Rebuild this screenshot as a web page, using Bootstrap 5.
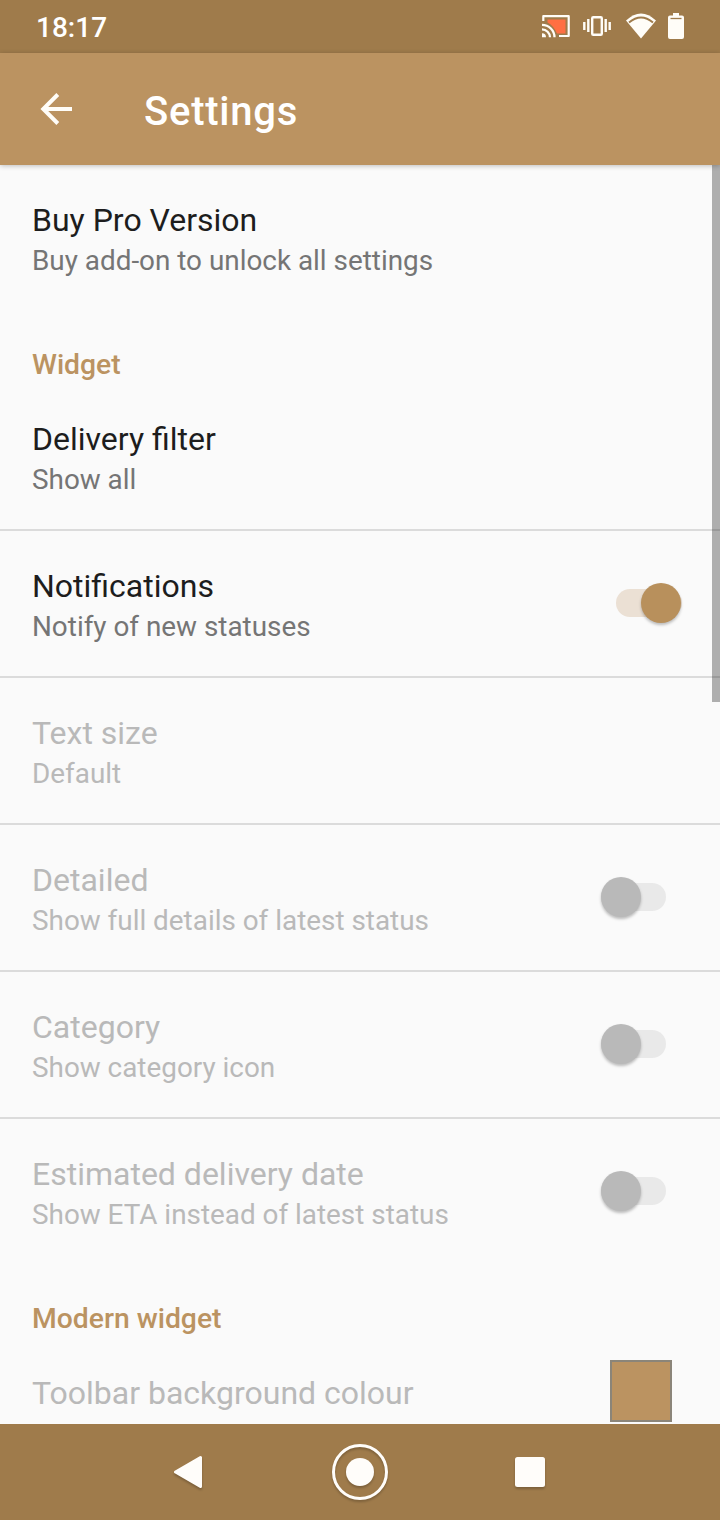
<!DOCTYPE html>
<html lang="en">
<head>
<meta charset="utf-8">
<meta name="viewport" content="width=device-width, initial-scale=1">
<title>Settings</title>
<link href="https://cdn.jsdelivr.net/npm/bootstrap@5.3.0/dist/css/bootstrap.min.css" rel="stylesheet">
<style>
:root{--tan:#bb9361;--tan-dark:#9f7b4b}
body{font-family:Roboto,sans-serif;background:#fafafa;color:#1d1d1d;width:720px;height:1520px}
.status{height:53px;background:var(--tan-dark);padding-left:36px}
.clock{font-size:28px;font-weight:500;line-height:53px;padding-top:1px}
.appbar{height:112px;background:var(--tan);box-shadow:0 1px 5px rgba(0,0,0,.24);z-index:1}
.appbar h1{font-size:40px;font-weight:500;line-height:48px;margin:6px 0 0 64px;letter-spacing:.75px}
.pref{height:145px;padding:35px 48px 0 32px}
.pref + .pref{border-top:2px solid #dbdbdb;height:147px}
.pref-title{font-size:32px;line-height:40px}
.pref-sum{font-size:27.86px;line-height:42px;color:#757575}
.off .pref-title,.off .pref-sum{color:#b9b9b9}
.group-title{font-size:28.3px;line-height:40px;height:74px;padding:35px 32px 0;font-weight:500;color:var(--tan)}
.toggle{width:65px;height:28px;border-radius:14px;margin:23px 6px 0 0;background:#e9e9e9}
.toggle i{display:block;width:40px;height:40px;border-radius:50%;background:#b9b9b9;margin-top:-6px;box-shadow:0 2px 3px rgba(0,0,0,.25)}
.toggle.on{background:#ebe0d4;width:66px;margin-right:-10px}
.toggle.on i{background:#b8905c;margin-left:25px}
.swatch{width:62px;height:62px;border:2px solid #8b8579;background:var(--tan);margin-top:-13px}
.thumb{top:0;right:0;width:8px;height:537px;background:#000;opacity:.3}
.navkeys{height:96px;background:var(--tan-dark)}
.navkeys svg{filter:drop-shadow(0 2px 1px rgba(0,0,0,.22))}
</style>
</head>
<body class="d-flex flex-column overflow-hidden">
<header class="status d-flex align-items-start justify-content-between text-white flex-shrink-0">
  <span class="clock">18:17</span>
  <svg width="200" height="53" viewBox="520 0 200 53" fill="none" stroke="#fffdf8">
    <path d="M547.500 19.500H565.500V33.500H557Q553.500 25.500 547.500 22.500Z" fill="#ff6f43" stroke="none"/>
    <path d="M543.300 21V16.200H568.700V36H559" stroke-width="2.200" stroke-linejoin="round"/>
    <path d="M542 24.800A12.500 12.500 0 0 1 554.500 37.300M542 29.400A8 8 0 0 1 550 37.300" stroke-width="2.300"/>
    <path d="M542 33.300A4 4 0 0 1 546 37.300H542Z" fill="#fffdf8" stroke="none"/>
    <rect x="592.200" y="17.200" width="9.600" height="17.600" rx="1" stroke-width="2.400"/>
    <path d="M588.300 19V32M584.300 22V30M605.700 19V32M609.700 22V30" stroke-width="2.400"/>
    <path d="M626 20.500Q641 6.500 656 20.500L641 38.500Z" fill="#fffdf8" stroke="none"/>
    <path d="M629 22.500Q641 12.500 653 22.500" stroke="#9f7b4b" stroke-width="2"/>
    <path d="M673 13h6v2.500h3q2 0 2 2V37q0 2-2 2H670q-2 0-2-2V17.500q0-2 2-2h3Z" fill="#fffdf8" stroke="none"/>
    <path d="M670.500 18.500H681.500" stroke="#9f7b4b" stroke-width="1.300"/>
  </svg>
</header>
<div class="appbar d-flex align-items-center text-white flex-shrink-0 position-relative">
  <svg class="ms-4 ps-3" width="56" height="40" viewBox="0 0 40 40" overflow="visible" fill="none" stroke="#fffdf8" stroke-width="4"><path d="M32 20H3M17.800 5.500L3.300 20L17.800 34.500"/></svg>
  <h1>Settings</h1>
</div>
<main class="flex-grow-1 overflow-hidden position-relative">
  <section>
    <div class="pref"><div class="pref-title">Buy Pro Version</div><div class="pref-sum">Buy add-on to unlock all settings</div></div>
  </section>
  <section>
    <h2 class="group-title mb-0">Widget</h2>
    <div class="pref"><div class="pref-title">Delivery filter</div><div class="pref-sum">Show all</div></div>
    <div class="pref d-flex justify-content-between"><div><div class="pref-title">Notifications</div><div class="pref-sum">Notify of new statuses</div></div><div class="toggle on"><i></i></div></div>
    <div class="pref off"><div class="pref-title">Text size</div><div class="pref-sum">Default</div></div>
    <div class="pref off d-flex justify-content-between"><div><div class="pref-title">Detailed</div><div class="pref-sum">Show full details of latest status</div></div><div class="toggle"><i></i></div></div>
    <div class="pref off d-flex justify-content-between"><div><div class="pref-title">Category</div><div class="pref-sum">Show category icon</div></div><div class="toggle"><i></i></div></div>
    <div class="pref off d-flex justify-content-between"><div><div class="pref-title">Estimated delivery date</div><div class="pref-sum">Show ETA instead of latest status</div></div><div class="toggle"><i></i></div></div>
  </section>
  <section>
    <h2 class="group-title mb-0">Modern widget</h2>
    <div class="pref off d-flex justify-content-between"><div class="pref-title">Toolbar background colour</div><div class="swatch"></div></div>
  </section>
  <div class="thumb position-absolute"></div>
</main>
<nav class="navkeys flex-shrink-0">
  <svg width="720" height="96" viewBox="0 1424 720 96" fill="#fffdfa" stroke="#fffdfa" stroke-linejoin="round">
    <path d="M175.500 1472L200.500 1457.500V1486.500Z" stroke-width="3"/>
    <circle cx="360" cy="1472" r="14" stroke="none"/>
    <circle cx="360" cy="1472" r="26.500" fill="none" stroke-width="3"/>
    <rect x="515" y="1457" width="30" height="30" rx="2.500" stroke="none"/>
  </svg>
</nav>
<script src="https://cdn.jsdelivr.net/npm/bootstrap@5.3.0/dist/js/bootstrap.bundle.min.js"></script>
</body>
</html>
